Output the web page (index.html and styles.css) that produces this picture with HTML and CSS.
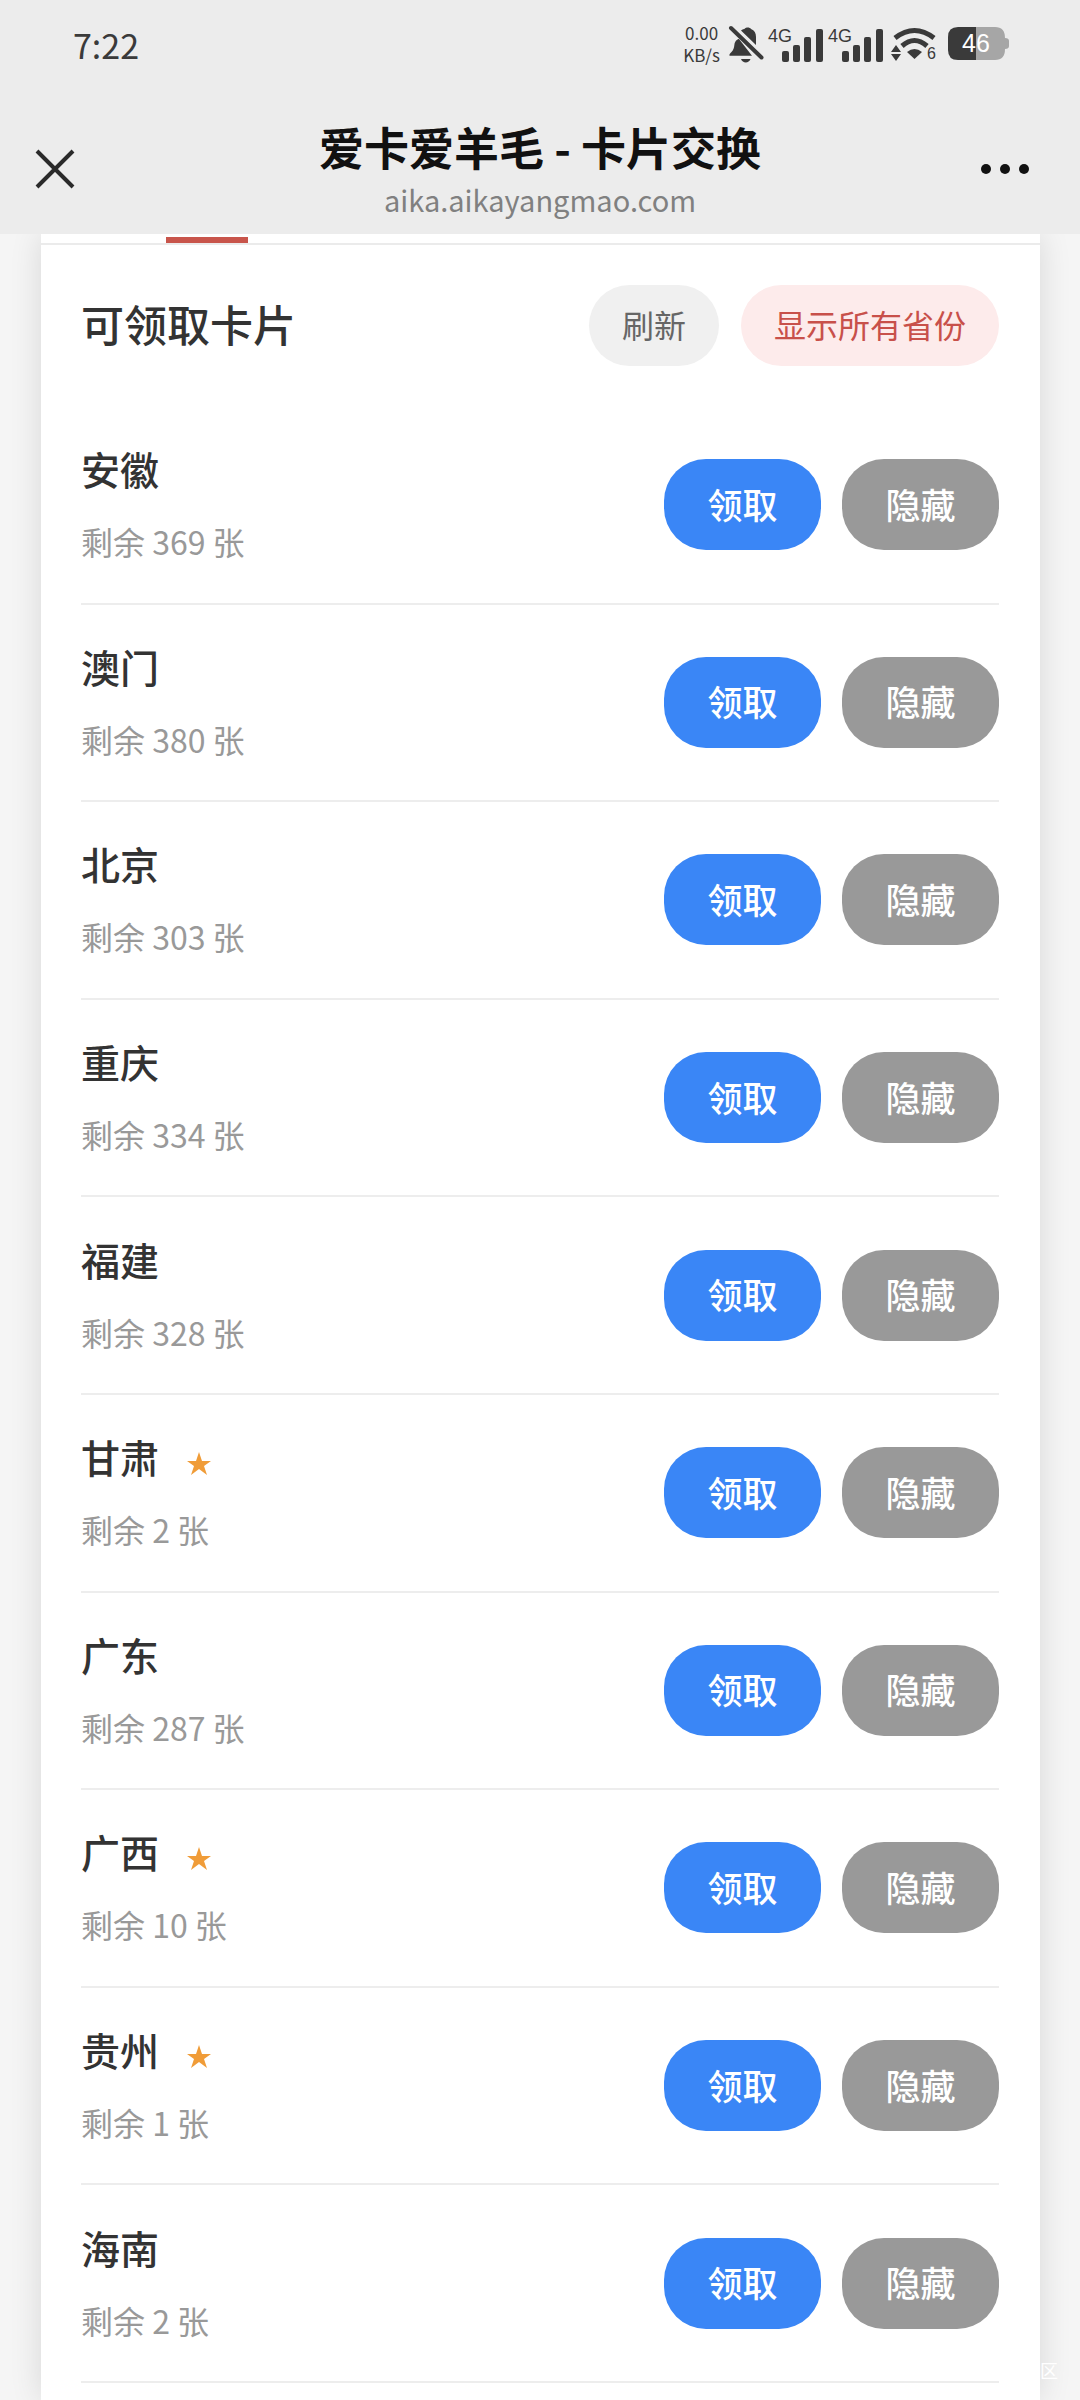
FILE: index.html
```html
<!DOCTYPE html>
<html lang="zh-CN">
    <head>
        <meta charset="utf-8">
        <meta name="viewport" content="width=device-width, initial-scale=1">
        <title>爱卡爱羊毛 - 卡片交换</title>
        <link rel="stylesheet" href="styles.css">
    </head>
    <body>
        <header class="top">
            <div class="status">
                <span class="time">7:22</span>
                <span class="speed">0.00<br>KB/s</span>
                <svg class="bell" width="36" height="38" viewBox="0 0 36 38" fill="#3a3a3a">
                    <path d="M11 14L24 30.7H1.5C1 29.5 2 28.500 3.500 27C5.500 25 6 23 6.500 19C7 16.500 9 14 11 14Z"/>
                    <path d="M13 5.500C14.500 4.500 16 4 17 3.500C18 2 22 2 23 4C26.500 5.500 28 8 28 12V20Z"/>
                    <path d="M13 34H22.500C21 38.500 14.500 38.500 13 34Z"/>
                    <path d="M3 3L33.500 32.500" stroke="#3a3a3a" stroke-width="4" stroke-linecap="round"/>
                </svg>
                <svg class="signal" width="56" height="38" viewBox="0 0 56 38" fill="#3a3a3a">
                    <text x="0" y="17" font-size="18">4G</text>
                    <rect x="14" y="26" width="7" height="11" rx="2"/>
                    <rect x="25" y="20" width="7" height="17" rx="2"/>
                    <rect x="36" y="12" width="7" height="25" rx="2"/>
                    <rect x="48" y="4" width="7" height="33" rx="2"/>
                </svg>
                <svg class="signal" width="56" height="38" viewBox="0 0 56 38" fill="#3a3a3a">
                    <text x="0" y="17" font-size="18">4G</text>
                    <rect x="14" y="26" width="7" height="11" rx="2"/>
                    <rect x="25" y="20" width="7" height="17" rx="2"/>
                    <rect x="36" y="12" width="7" height="25" rx="2"/>
                    <rect x="48" y="4" width="7" height="33" rx="2"/>
                </svg>
                <svg class="wifi" width="46" height="38" viewBox="0 0 46 38" fill="#3a3a3a">
                    <path d="M4 13Q23.500 -2 43 13M11 21Q23.500 10 36 21" fill="none" stroke="#3a3a3a" stroke-width="5"/>
                    <path d="M16 27Q23.500 21 31 27L23.500 34Z"/>
                    <path d="M5 20L10 27H0ZM0 29H10L5 36Z"/>
                    <text x="36" y="34" font-size="16">6</text>
                </svg>
                <svg class="battery" width="62" height="36" viewBox="0 0 62 36">
                    <path d="M29 1H48Q58 1 58 12Q62 12 62 15V20Q62 23 58 23Q58 34 48 34H29Z" fill="#a6a6a6"/>
                    <path d="M29 1H11Q1 1 1 11V24Q1 34 11 34H29Z" fill="#3a3a3a"/>
                    <text x="29" y="26" font-size="25" text-anchor="middle" fill="#fff">46</text>
                </svg>
            </div>
            <div class="nav">
                <button class="icon-btn" aria-label="关闭">
                    <svg width="38" height="38" viewBox="0 0 38 38"><path d="M1 1L37 37M37 1L1 37" stroke="#2a2a2a" stroke-width="4"/></svg>
                </button>
                <div class="nav-title">
                    <h1>爱卡爱羊毛 - 卡片交换</h1>
                    <p>aika.aikayangmao.com</p>
                </div>
                <button class="icon-btn" aria-label="更多">
                    <svg width="50" height="12" viewBox="0 0 50 12" fill="#111"><circle cx="6" cy="6" r="5"/><circle cx="25" cy="6" r="5"/><circle cx="44" cy="6" r="5"/></svg>
                </button>
            </div>
        </header>
        <main class="card">
            <div class="tabs"><div class="tab-line"></div></div>
            <div class="card-head">
                <h2>可领取卡片</h2>
                <button class="pill">刷新</button>
                <button class="pill pill-red">显示所有省份</button>
            </div>
            <ul class="list" id="list"></ul>
        </main>
        <span class="mark">区</span>
        <script>
            const cards=[
                {name:'安徽',count:369},
                {name:'澳门',count:380},
                {name:'北京',count:303},
                {name:'重庆',count:334},
                {name:'福建',count:328},
                {name:'甘肃',count:2,star:true},
                {name:'广东',count:287},
                {name:'广西',count:10,star:true},
                {name:'贵州',count:1,star:true},
                {name:'海南',count:2}
            ];
            const star='<svg class="star" width="26" height="26" viewBox="0 0 26 26"><path d="M13 1L16 10H25L18 15L21 24L13 18L5 24L8 15L1 10H10Z" fill="#f09c38"/></svg>';
            //生成省份列表
            document.getElementById('list').innerHTML=cards.map(function(item){
                return '<li class="row"><div class="info"><h3>'+item.name+(item.star?star:'')+'</h3>'
                    +'<p>剩余 '+item.count+' 张</p></div>'
                    +'<button class="btn btn-get">领取</button>'
                    +'<button class="btn btn-hide">隐藏</button></li>';
            }).join('');
        </script>
    </body>
</html>
```

FILE: styles.css
```css
*{
    margin: 0;
    padding: 0;
    box-sizing: border-box;
}
body{
    display: flex;
    flex-direction: column;
    min-height: 100vh;
    background: #f5f5f5;
    color: #333;
    font-family: "Noto Sans CJK SC", sans-serif;
}
button{
    border: none;
    font-family: inherit;
    cursor: pointer;
}
svg{
    display: block;
    overflow: visible;
    font-family: "Liberation Sans", sans-serif;
}
/* 顶部 */
.top{
    position: relative;
    z-index: 1;
    height: 234px;
    background: #ececec;
}
.status{
    display: flex;
    align-items: center;
    height: 88px;
    padding: 0 71px 0 73px;
    color: #3a3a3a;
}
.time{
    flex: 1;
    font-size: 34px;
}
.speed{
    margin-right: 8px;
    font-size: 17px;
    line-height: 22px;
    text-align: center;
}
.bell{
    margin-right: 4px;
}
.signal{
    margin-right: 4px;
}
.signal + .wifi{
    margin: 0 10px 0 3px;
}
.nav{
    display: flex;
    align-items: center;
    justify-content: space-between;
    height: 146px;
    padding: 28px 36px 0;
}
.icon-btn{
    display: flex;
    width: 64px;
    padding-bottom: 12px;
    background: none;
}
.nav-title{
    padding-bottom: 12px;
    text-align: center;
}
.nav-title h1{
    color: #111;
    font-size: 45px;
    font-weight: 700;
    line-height: 60px;
}
.nav-title p{
    color: #808080;
    font-size: 29px;
    line-height: 44px;
}
/* 卡片列表 */
.card{
    display: flex;
    flex: 1;
    flex-direction: column;
    margin: 0 40px 0 41px;
    background: #fff;
    box-shadow: 0 0 30px rgba(0,0,0,.12);
}
.tabs{
    padding: 3px 0 0 125px;
    border-bottom: 2px solid #ebebeb;
}
.tab-line{
    width: 82px;
    height: 6px;
    background: #c8554b;
}
.card-head{
    display: flex;
    align-items: center;
    gap: 22px;
    padding: 40px 41px 41px 40px;
}
.card-head h2{
    flex: 1;
    padding-bottom: 5px;
    font-size: 43px;
    font-weight: 500;
    line-height: 60px;
}
.pill{
    height: 81px;
    padding: 0 33px 3px;
    border-radius: 41px;
    background: #f0f0f0;
    color: #666;
    font-size: 32px;
}
.pill-red{
    background: #fdebeb;
    color: #c8504a;
}
.list{
    display: grid;
    flex: 1;
    grid-auto-rows: 1fr;
    padding: 0 41px 17px 40px;
    list-style: none;
}
.row{
    display: flex;
    align-items: center;
    gap: 21px;
    border-bottom: 2px solid #ededed;
}
.info{
    flex: 1;
    padding-bottom: 8px;
}
.info h3{
    display: flex;
    align-items: center;
    margin-bottom: 21px;
    font-size: 39px;
    font-weight: 500;
    line-height: 60px;
}
.info p{
    color: #999;
    font-size: 32px;
    line-height: 44px;
}
.star{
    margin: 16px 0 0 27px;
}
.btn{
    width: 157px;
    height: 91px;
    padding-bottom: 3px;
    border-radius: 42px;
    color: #fff;
    font-size: 35px;
    font-weight: 500;
}
.btn-get{
    background: #3a86f6;
}
.btn-hide{
    background: #999;
}
.mark{
    position: absolute;
    right: 22px;
    bottom: 20px;
    color: #fff;
    font-size: 18px;
    line-height: 20px;
}
```
